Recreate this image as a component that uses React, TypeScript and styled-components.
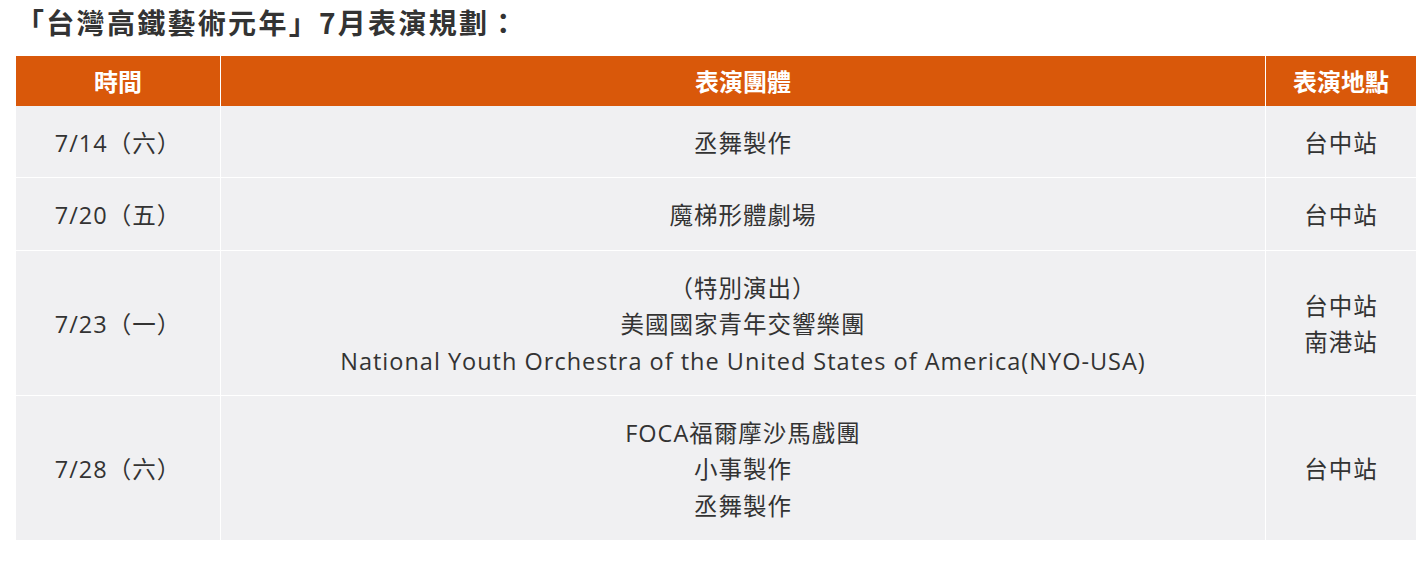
import React from "react";
import styled, { createGlobalStyle } from "styled-components";

const Global = createGlobalStyle`
  html, body { margin: 0; padding: 0; background: #ffffff; }
  body { font-family: "Open Sans", "Noto Sans CJK TC", sans-serif; color: #333333; }
`;

const Page = styled.div`
  padding: 1px 10px 0 16px;
  width: 1398px;
`;

const Title = styled.h2`
  margin: 0 0 13px 0;
  font-family: "Noto Sans CJK TC", sans-serif;
  font-size: 28px;
  line-height: 42px;
  font-weight: 700;
  letter-spacing: 2.3px;
  color: #333333;
`;

const Table = styled.table`
  width: 1398px;
  border-collapse: collapse;
  table-layout: fixed;
  background: #f0f0f2;
`;

const HeadCell = styled.th<{ $w: number }>`
  width: ${(p) => p.$w}px;
  background: #d9580a;
  color: #ffffff;
  font-family: "Noto Sans CJK TC", sans-serif;
  font-size: 24px;
  font-weight: 700;
  line-height: 34px;
  padding: 8px 0;
  text-align: center;
  border-left: 1px solid #ffffff;
  &:first-child { border-left: none; }
`;

const Row = styled.tr`
  & + & td { border-top: 1px solid #ffffff; }
`;

const Cell = styled.td`
  font-size: 23.5px;
  line-height: 36.4px;
  letter-spacing: 1px;
  padding: 19px 0 16px;
  text-align: center;
  vertical-align: middle;
  color: #333333;
  border-left: 1px solid #ffffff;
  &:first-child { border-left: none; }
`;

const Line = styled.div``;

const rows: { date: string; groups: string[]; places: string[] }[] = [
  { date: "7/14（六）", groups: ["丞舞製作"], places: ["台中站"] },
  { date: "7/20（五）", groups: ["魔梯形體劇場"], places: ["台中站"] },
  {
    date: "7/23（一）",
    groups: [
      "（特別演出）",
      "美國國家青年交響樂團",
      "National Youth Orchestra of the United States of America(NYO-USA)",
    ],
    places: ["台中站", "南港站"],
  },
  {
    date: "7/28（六）",
    groups: ["FOCA福爾摩沙馬戲團", "小事製作", "丞舞製作"],
    places: ["台中站"],
  },
];

export default function App() {
  return (
    <>
      <Global />
      <Page>
        <Title>「台灣高鐵藝術元年」7月表演規劃：</Title>
        <Table>
          <thead>
            <tr>
              <HeadCell $w={204}>時間</HeadCell>
              <HeadCell $w={1044}>表演團體</HeadCell>
              <HeadCell $w={150}>表演地點</HeadCell>
            </tr>
          </thead>
          <tbody>
            {rows.map((r) => (
              <Row key={r.date}>
                <Cell>{r.date}</Cell>
                <Cell>
                  {r.groups.map((g) => (
                    <Line key={g}>{g}</Line>
                  ))}
                </Cell>
                <Cell>
                  {r.places.map((p) => (
                    <Line key={p}>{p}</Line>
                  ))}
                </Cell>
              </Row>
            ))}
          </tbody>
        </Table>
      </Page>
    </>
  );
}
